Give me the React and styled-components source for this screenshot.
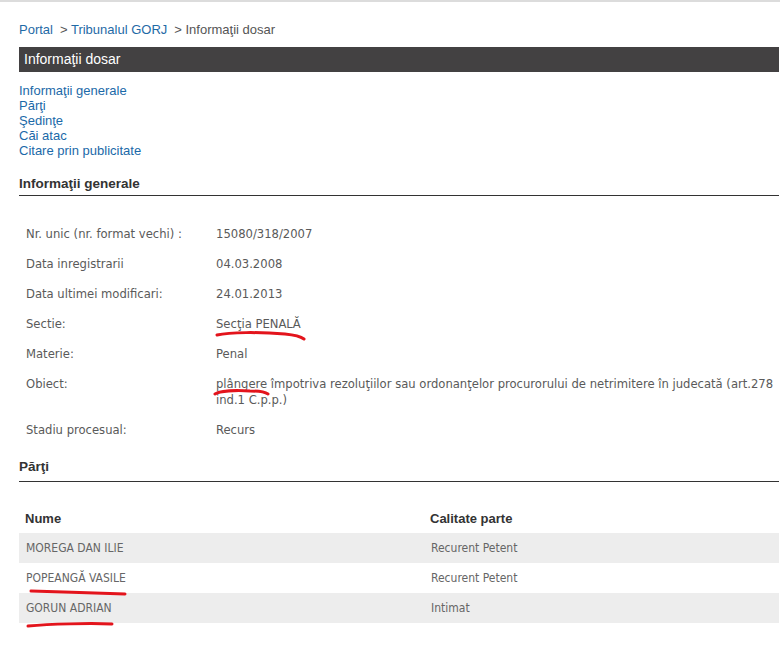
import React from "react"
import styled, { createGlobalStyle } from "styled-components"

const Global = createGlobalStyle`
  html, body {
    margin: 0;
    padding: 0;
    background: #fff;
  }
  body {
    font-family: "Liberation Sans", Arial, sans-serif;
  }
`

const Screen = styled.div`
  position: relative;
  width: 780px;
  min-height: 648px;
  border-top: 2px solid #dcdcdc;
  box-sizing: border-box;
`

const Page = styled.div`
  padding: 0 1px 0 19px;
`

const Crumbs = styled.div`
  margin-top: 20px;
  font-size: 13px;
  line-height: 16px;
  color: #555;
  display: flex;
  gap: 7px;

  a {
    color: #1f6aa6;
    text-decoration: none;
  }
`

const TitleBar = styled.div`
  margin-top: 9px;
  height: 25px;
  background: #434142;
  color: #fff;
  font-size: 14px;
  line-height: 25px;
  padding-left: 5px;
`

const Nav = styled.nav`
  margin-top: 11px;
  display: flex;
  flex-direction: column;

  a {
    color: #1b69a8;
    font-size: 13px;
    line-height: 15px;
    text-decoration: none;
  }
`

const SectionTitle = styled.h2`
  margin: ${p => p.$top}px 0 0;
  font-size: 13.5px;
  font-weight: bold;
  color: #333;
  line-height: 16px;
  padding-bottom: ${p => p.$gap}px;
  border-bottom: 1px solid #333;
`

const InfoList = styled.div`
  margin-top: 23px;
  font-family: "DejaVu Sans Condensed", Tahoma, sans-serif;
  font-size: 12.9px;
  color: #5a5a5a;
`

const InfoRow = styled.div`
  display: grid;
  grid-template-columns: 190px 1fr;
  padding: 7px 0 7px 7px;
  line-height: 16px;
`

const Parties = styled.table`
  margin-top: 21px;
  width: 100%;
  border-collapse: collapse;

  th {
    text-align: left;
    font-weight: bold;
    font-size: 13px;
    color: #333;
    height: 30px;
    padding: 0 6px;
  }

  td {
    height: 30px;
    padding: 0 7px;
    color: #666;
    font-family: "DejaVu Sans Condensed", Tahoma, sans-serif;
    font-size: 12px;
  }

  tbody tr:nth-child(odd) {
    background: #ededed;
  }
`

const Scribbles = styled.svg`
  position: absolute;
  left: 0;
  top: 0;
  pointer-events: none;

  path {
    fill: none;
    stroke: #e3141c;
    stroke-width: 3;
    stroke-linecap: round;
  }
`

const info = [
  ["Nr. unic (nr. format vechi) :", "15080/318/2007"],
  ["Data inregistrarii", "04.03.2008"],
  ["Data ultimei modificari:", "24.01.2013"],
  ["Sectie:", "Secţia PENALĂ"],
  ["Materie:", "Penal"],
  ["Obiect:", "plângere împotriva rezoluţiilor sau ordonanţelor procurorului de netrimitere în judecată (art.278 ind.1 C.p.p.)"],
  ["Stadiu procesual:", "Recurs"],
]

const parties = [
  ["MOREGA DAN ILIE", "Recurent Petent"],
  ["POPEANGĂ VASILE", "Recurent Petent"],
  ["GORUN ADRIAN", "Intimat"],
]

export default function App() {
  return (
    <Screen>
      <Global />
      <Page>
        <Crumbs>
          <a href="#">Portal</a>
          <span>&gt; <a href="#">Tribunalul GORJ</a></span>
          <span>&gt; Informaţii dosar</span>
        </Crumbs>
        <TitleBar>Informaţii dosar</TitleBar>
        <Nav>
          <a href="#">Informaţii generale</a>
          <a href="#">Părţi</a>
          <a href="#">Şedinţe</a>
          <a href="#">Căi atac</a>
          <a href="#">Citare prin publicitate</a>
        </Nav>
        <SectionTitle $top={18} $gap={3}>Informaţii generale</SectionTitle>
        <InfoList>
          {info.map(([k, v]) => (
            <InfoRow key={k}>
              <span>{k}</span>
              <span>{v}</span>
            </InfoRow>
          ))}
        </InfoList>
        <SectionTitle $top={14} $gap={6}>Părţi</SectionTitle>
        <Parties>
          <thead>
            <tr>
              <th style={{ width: 393 }}>Nume</th>
              <th>Calitate parte</th>
            </tr>
          </thead>
          <tbody>
            {parties.map(([n, c]) => (
              <tr key={n}>
                <td>{n}</td>
                <td>{c}</td>
              </tr>
            ))}
          </tbody>
        </Parties>
      </Page>
      <Scribbles width="780" height="648" viewBox="0 0 780 648">
        <path d="M217 333 C230 330, 260 330, 285 332 C295 333, 300 334, 304 337" />
        <path d="M215 392 C220 389, 235 388, 250 389 C258 389, 265 390, 268 392" />
        <path d="M31 589 C60 590, 100 591, 125 592" />
        <path d="M28 624 C50 622, 90 621, 112 622" />
      </Scribbles>
    </Screen>
  )
}
